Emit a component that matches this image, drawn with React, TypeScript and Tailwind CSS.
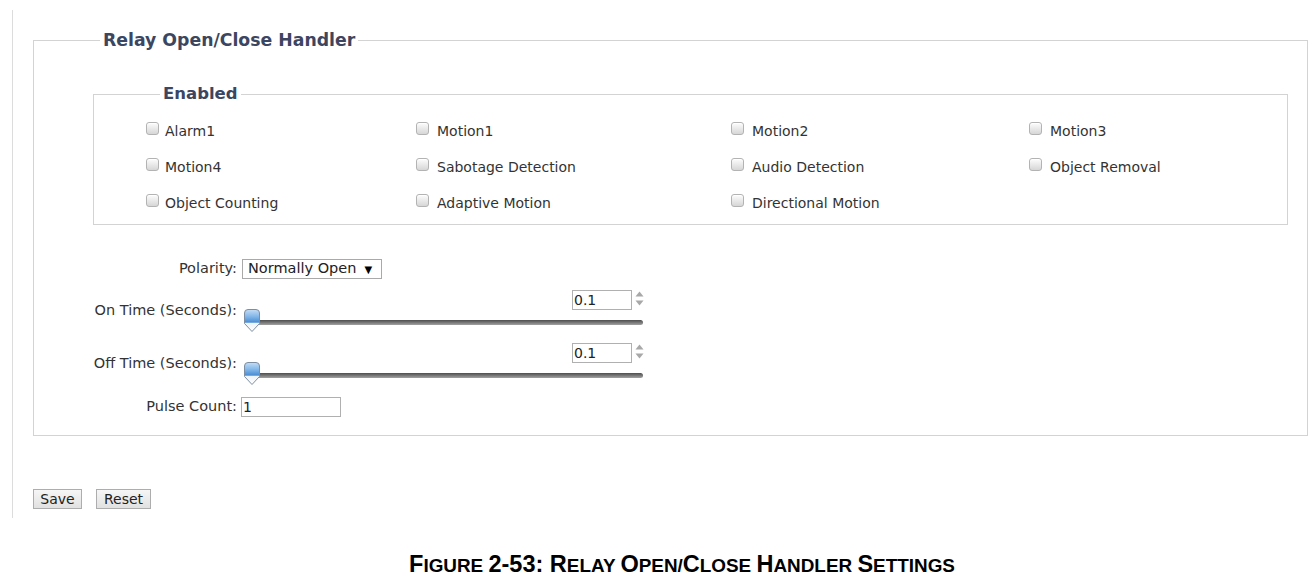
import React from 'react';

const Box = () => (
  <span className="inline-block w-[13px] h-[13px] shrink-0 -translate-y-[3px] rounded-[3px] border border-[#b3b3b3] bg-linear-to-b from-[#fdfdfd] to-[#d6d6d6] shadow-[inset_0_1px_0_#fff]" />
);

const options = [
  ['Alarm1', 'Motion1', 'Motion2', 'Motion3'],
  ['Motion4', 'Sabotage Detection', 'Audio Detection', 'Object Removal'],
  ['Object Counting', 'Adaptive Motion', 'Directional Motion', ''],
];

const Thumb = () => (
  <svg width="18" height="25" viewBox="0 0 18 25" className="absolute left-[1px] top-[18px]">
    <defs>
      <linearGradient id="thumbFill" x1="0" y1="0" x2="0" y2="1">
        <stop offset="0" stopColor="#c4ddf6" />
        <stop offset="0.3" stopColor="#86b9ea" />
        <stop offset="0.58" stopColor="#4a8dd4" />
        <stop offset="0.62" stopColor="#eef3f8" />
        <stop offset="1" stopColor="#ffffff" />
      </linearGradient>
    </defs>
    <path
      d="M1.5 5 Q1.5 1.5 5 1.5 H13 Q16.5 1.5 16.5 5 V15.5 L9 23.5 L1.5 15.5 Z"
      fill="url(#thumbFill)"
      stroke="#7d8ea3"
      strokeWidth="1"
    />
  </svg>
);

const Spinner = () => (
  <svg width="11" height="18" viewBox="0 0 11 18" className="ml-[2px]">
    <path d="M1.5 6.5 L5.5 1.5 L9.5 6.5 Z" fill="#a8a8a8" />
    <path d="M1.5 10.5 L5.5 15.5 L9.5 10.5 Z" fill="#a8a8a8" />
  </svg>
);

const SliderField = () => (
  <div className="relative flex flex-col w-[403px] h-[42px]">
    <div className="flex justify-end items-start">
      <div className="w-[60px] h-[20px] border border-[#b0b0b0] bg-white pl-[1px] text-[14px] leading-[18px] text-[#222]">
        0.1
      </div>
      <Spinner />
    </div>
    <div className="mt-[10px] ml-[8px] mr-[2px] h-[5px] rounded-full bg-linear-to-b from-[#4e4e4e] to-[#a3a3a3]" />
    <Thumb />
  </div>
);

const Cap = ({ children }: { children: React.ReactNode }) => (
  <span className="text-[23.5px]">{children}</span>
);

const App: React.FC = () => {
  return (
    <div className="w-[1315px] h-[588px] bg-white overflow-hidden font-['DejaVu_Sans',sans-serif] text-[#333]">
      <div className="ml-[12px] mt-[10px] h-[508px] w-[1296px] border-l border-[#dcdcdc] pl-[20px] pt-[21px]">
        <fieldset className="w-[1275px] border border-[#d3d3d3] pb-[18px]">
          <legend className="ml-[66px] px-[3px] text-[17.3px] leading-[18px] font-bold text-[#3c4660]">
            Relay Open/Close Handler
          </legend>

          <fieldset className="mt-[36px] ml-[59px] mr-[19px] border border-[#d3d3d3] pt-[10px] pb-[3px] pl-[52px]">
            <legend className="ml-[14px] px-[3px] text-[16.5px] leading-[18px] font-bold text-[#3c4660]">
              Enabled
            </legend>
            <div className="grid grid-cols-[270px_315px_298px_1fr]">
              {options.flat().map((label, i) => (
                <div key={i} className="flex items-center h-[36px] text-[14px]">
                  {label && (
                    <>
                      <Box />
                      <span className={i % 4 === 0 ? 'ml-[6px]' : 'ml-[8px]'}>{label}</span>
                    </>
                  )}
                </div>
              ))}
            </div>
          </fieldset>

          <div className="mt-[34px] flex flex-col gap-[11px] text-[14.5px]">
            <div className="flex items-center h-[20px]">
              <span className="w-[203px] text-right">Polarity:</span>
              <div className="ml-[5px] flex items-center w-[140px] h-[20px] border border-[#a9a9a9] bg-white pl-[5px] text-[14.5px] text-[#222]">
                <span>Normally Open</span>
                <span className="ml-[8px] text-[10px] text-black">▼</span>
              </div>
            </div>

            <div className="flex items-center">
              <span className="w-[203px] text-right">On Time (Seconds):</span>
              <div className="ml-[5px]">
                <SliderField />
              </div>
            </div>

            <div className="flex items-center">
              <span className="w-[203px] text-right">Off Time (Seconds):</span>
              <div className="ml-[5px]">
                <SliderField />
              </div>
            </div>

            <div className="mt-[1px] flex items-center h-[20px]">
              <span className="w-[203px] text-right">Pulse Count:</span>
              <div className="ml-[4px] w-[100px] h-[20px] border border-[#b0b0b0] bg-white pl-[1px] text-[14px] leading-[18px] text-[#222]">
                1
              </div>
            </div>
          </div>
        </fieldset>

        <div className="mt-[53px] flex">
          <button className="w-[49px] h-[20px] border border-[#adadad] bg-linear-to-b from-[#f6f6f6] to-[#e1e1e1] text-[14px] leading-[18px] text-[#222]">
            Save
          </button>
          <button className="ml-[14px] w-[55px] h-[20px] border border-[#adadad] bg-linear-to-b from-[#f6f6f6] to-[#e1e1e1] text-[14px] leading-[18px] text-[#222]">
            Reset
          </button>
        </div>
      </div>

      <div className="mt-[34px] pl-[49px] text-center font-['Liberation_Sans',Arial,sans-serif] font-bold text-[18.9px] text-black leading-[24px]">
        <Cap>F</Cap>IGURE <Cap>2-53: R</Cap>ELAY <Cap>O</Cap>PEN/<Cap>C</Cap>LOSE <Cap>H</Cap>ANDLER <Cap>S</Cap>ETTINGS
      </div>
    </div>
  );
};

export default App;
